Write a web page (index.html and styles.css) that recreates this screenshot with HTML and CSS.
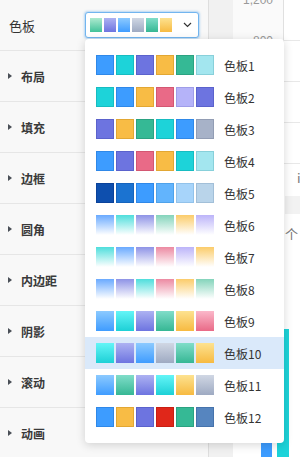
FILE: index.html
```html
<!DOCTYPE html>
<html lang="zh-CN">
<head>
  <meta charset="UTF-8" />
  <meta name="viewport" content="width=device-width, initial-scale=1" />
  <title>样式设置</title>
  <link rel="stylesheet" href="styles.css">
</head>
<body>

  <aside class="panel">
    <div class="field">
      <span class="field-label">色板</span>
      <div class="select-wrap">
        <div class="select">
          <i class="chip g-mint"></i><i class="chip g-purple"></i><i class="chip g-blue"></i><i class="chip g-grey"></i><i class="chip g-green"></i><i class="chip g-yellow"></i>
          <svg class="chevron" width="9" height="6" viewBox="0 0 9 6"><polyline points="1,1 4.5,4.5 8,1" fill="none" stroke="#333" stroke-width="1.2"/></svg>
        </div>

        <!-- palette dropdown, opened -->
        <ul class="dropdown">
          <li class="option"><i class="sw s-blue"></i><i class="sw s-cyan"></i><i class="sw s-purple"></i><i class="sw s-yellow"></i><i class="sw s-green"></i><i class="sw s-lcyan"></i><span>色板1</span></li>
          <li class="option"><i class="sw s-cyan"></i><i class="sw s-blue"></i><i class="sw s-yellow"></i><i class="sw s-pink"></i><i class="sw s-lav"></i><i class="sw s-purple"></i><span>色板2</span></li>
          <li class="option"><i class="sw s-purple"></i><i class="sw s-yellow"></i><i class="sw s-green"></i><i class="sw s-cyan"></i><i class="sw s-blue"></i><i class="sw s-grey"></i><span>色板3</span></li>
          <li class="option"><i class="sw s-blue"></i><i class="sw s-purple"></i><i class="sw s-pink"></i><i class="sw s-yellow"></i><i class="sw s-cyan"></i><i class="sw s-lcyan"></i><span>色板4</span></li>
          <li class="option"><i class="sw s-navy"></i><i class="sw s-blue2"></i><i class="sw s-blue"></i><i class="sw s-sky"></i><i class="sw s-pale"></i><i class="sw s-mist"></i><span>色板5</span></li>
          <li class="option"><i class="sw f-blue"></i><i class="sw f-cyan"></i><i class="sw f-purple"></i><i class="sw f-green"></i><i class="sw f-yellow"></i><i class="sw f-lav"></i><span>色板6</span></li>
          <li class="option"><i class="sw f-cyan"></i><i class="sw f-blue"></i><i class="sw f-purple"></i><i class="sw f-pink"></i><i class="sw f-lav"></i><i class="sw f-yellow"></i><span>色板7</span></li>
          <li class="option"><i class="sw f-blue"></i><i class="sw f-purple"></i><i class="sw f-cyan"></i><i class="sw f-pink"></i><i class="sw f-yellow"></i><i class="sw f-green"></i><span>色板8</span></li>
          <li class="option"><i class="sw g-blue"></i><i class="sw g-cyan"></i><i class="sw g-purple"></i><i class="sw g-green"></i><i class="sw g-yellow"></i><i class="sw g-pink"></i><span>色板9</span></li>
          <li class="option active"><i class="sw g-cyan"></i><i class="sw g-purple"></i><i class="sw g-blue"></i><i class="sw g-grey"></i><i class="sw g-green"></i><i class="sw g-yellow"></i><span>色板10</span></li>
          <li class="option"><i class="sw g-blue"></i><i class="sw g-green"></i><i class="sw g-purple"></i><i class="sw g-cyan"></i><i class="sw g-yellow"></i><i class="sw g-grey"></i><span>色板11</span></li>
          <li class="option"><i class="sw s-blue"></i><i class="sw s-yellow"></i><i class="sw s-purple"></i><i class="sw s-red"></i><i class="sw s-green"></i><i class="sw s-steel"></i><span>色板12</span></li>
        </ul>
      </div>
    </div>

    <div class="group"><i class="caret"></i>布局</div>
    <div class="group"><i class="caret"></i>填充</div>
    <div class="group"><i class="caret"></i>边框</div>
    <div class="group"><i class="caret"></i>圆角</div>
    <div class="group"><i class="caret"></i>内边距</div>
    <div class="group"><i class="caret"></i>阴影</div>
    <div class="group"><i class="caret"></i>滚动</div>
    <div class="group"><i class="caret"></i>动画</div>
  </aside>

  <main class="canvas">
    <div class="gutter"></div>
    <div class="board">
      <div class="chart">
        <div class="axis">
          <span>1,200</span>
          <span>800</span>
          <span>400</span>
          <span>0</span>
        </div>
        <div class="plot">
          <div class="grid"></div>
          <div class="grid"></div>
          <div class="grid"></div>
          <div class="grid"></div>
        </div>
      </div>
      <div class="table">
        <div class="cell note">il</div>
        <div class="cell head"></div>
        <div class="cell unit">个</div>
      </div>
      <div class="bars">
        <div class="bar blue" style="height: 90px"></div>
        <div class="bar teal" style="height: 128px"></div>
      </div>
    </div>
  </main>

</body>
</html>
```

FILE: styles.css
```css
* {
  box-sizing: border-box;
}

body {
  margin: 0;
  height: 457px;
  overflow: hidden;
  display: flex;
  font-family: "Noto Sans CJK SC", "Noto Sans", sans-serif;
  font-size: 12px;
  color: #333;
  background: #fff;
}

/* left settings panel */
.panel {
  width: 209px;
  flex-shrink: 0;
  background: #f8f8f8;
  border-right: 1px solid #dedede;
}

.field,
.group {
  height: 51px;
  display: flex;
  align-items: center;
  border-bottom: 1px solid #e6e6e6;
}

.field {
  padding-left: 9px;
}

.field-label {
  width: 76px;
  font-size: 13px;
}

.group {
  padding-left: 8px;
  font-weight: 700;
  color: #3a3a3a;
}

.caret {
  width: 0;
  height: 0;
  border-left: 4px solid #4a4f57;
  border-top: 3px solid transparent;
  border-bottom: 3px solid transparent;
  margin-right: 9px;
}

.select-wrap {
  position: relative;
}

.select {
  width: 114px;
  height: 26px;
  display: flex;
  align-items: center;
  padding: 0 6px 0 4px;
  background: #fff;
  border: 1px solid #72b5ef;
  border-radius: 3px;
  box-shadow: 0 0 2px 1px rgba(120, 182, 240, 0.5);
}

.chip {
  width: 12px;
  height: 14px;
  margin-right: 2px;
}

.chevron {
  margin-left: auto;
}

/* dropdown */
.dropdown {
  position: absolute;
  top: 27px;
  left: 0;
  width: 199px;
  margin: 0;
  padding: 10px 0;
  list-style: none;
  background: #fff;
  border-radius: 4px;
  box-shadow: 0 2px 10px rgba(0, 0, 0, 0.16);
  z-index: 10;
}

.option {
  height: 32px;
  display: flex;
  align-items: center;
  padding-left: 11px;
  gap: 2px;
}

.option.active {
  background: #dae9fa;
}

.option span {
  margin-left: 8px;
}

.sw {
  width: 18px;
  height: 20px;
}

/* solid swatches */
.s-blue   { background: #3d9cff; border: 1px solid #2f88e8; }
.s-cyan   { background: #1dd3d9; border: 1px solid #17bcc1; }
.s-purple { background: #6d74e0; border: 1px solid #5b62cc; }
.s-yellow { background: #f8bc45; border: 1px solid #e2a733; }
.s-green  { background: #35b995; border: 1px solid #2ba281; }
.s-lcyan  { background: #a3e6ef; border: 1px solid #88d0da; }
.s-pink   { background: #e96a87; border: 1px solid #d35772; }
.s-lav    { background: #b5b3f9; border: 1px solid #9f9de8; }
.s-grey   { background: #a7b2c8; border: 1px solid #929db4; }
.s-navy   { background: #0e4fae; border: 1px solid #0b429a; }
.s-blue2  { background: #1b73d1; border: 1px solid #1664bd; }
.s-sky    { background: #62b4fd; border: 1px solid #4fa2ea; }
.s-pale   { background: #a7d4fa; border: 1px solid #92c2ea; }
.s-mist   { background: #b9d4ea; border: 1px solid #a2bfd8; }
.s-red    { background: #e0271a; border: 1px solid #c81f13; }
.s-steel  { background: #5685bf; border: 1px solid #4673ac; }

/* fading to white */
.f-blue   { background: linear-gradient(#6aaaff, #fff); }
.f-cyan   { background: linear-gradient(#4fdedc, #fff); }
.f-purple { background: linear-gradient(#8e93e6, #fff); }
.f-green  { background: linear-gradient(#84d4bb, #fff); }
.f-yellow { background: linear-gradient(#fbcc6a, #fff); }
.f-lav    { background: linear-gradient(#bcb4f9, #fff); }
.f-pink   { background: linear-gradient(#ec8aa2, #fff); }

/* light to deep */
.g-blue   { background: linear-gradient(#8ccaff, #3f9cff); }
.g-cyan   { background: linear-gradient(#64f5f7, #1dd0d6); }
.g-purple { background: linear-gradient(#adb2f2, #6d74e0); }
.g-green  { background: linear-gradient(#80ddc9, #36b794); }
.g-yellow { background: linear-gradient(#fde290, #f7ba41); }
.g-pink   { background: linear-gradient(#fbb8ca, #e96a87); }
.g-grey   { background: linear-gradient(#d0d7e4, #9eaac2); }
.g-mint   { background: linear-gradient(#aeeacf, #42c29a); }

/* canvas behind the panel */
.canvas {
  flex: 1;
  display: flex;
}

.gutter {
  width: 24px;
  background: #f1f1f1;
}

.board {
  flex: 1;
  display: flex;
  flex-direction: column;
  background: #fff;
}

.chart {
  height: 164px;
  display: flex;
}

.axis {
  width: 51px;
  border-right: 1px solid #e0e0e0;
  background: #fafafa;
  margin-top: -20px;
  font-family: "Liberation Sans", Arial, sans-serif;
  color: #999;
  text-align: right;
  padding-right: 10px;
}

.axis span {
  display: block;
  height: 41px;
  line-height: 41px;
}

.plot {
  flex: 1;
}

.grid {
  height: 41px;
  border-bottom: 1px solid #e8e8e8;
}

.table {
  padding-left: 52px;
  color: #777;
  font-size: 13px;
}

.cell {
  height: 16px;
  line-height: 16px;
  margin-top: 6px;
}

.cell.note {
  padding-left: 12px;
}

.cell.head {
  height: 18px;
  margin-top: 10px;
  background: #f2f2f2;
}

.cell.unit {
  margin-top: 12px;
}

.bars {
  flex: 1;
  display: flex;
  align-items: flex-end;
  gap: 5px;
  padding-left: 28px;
}

.bar {
  width: 12px;
}

.bar.blue {
  width: 11px;
  background: #3d9cff;
}

.bar.teal {
  background: #1dd3d9;
}
```
